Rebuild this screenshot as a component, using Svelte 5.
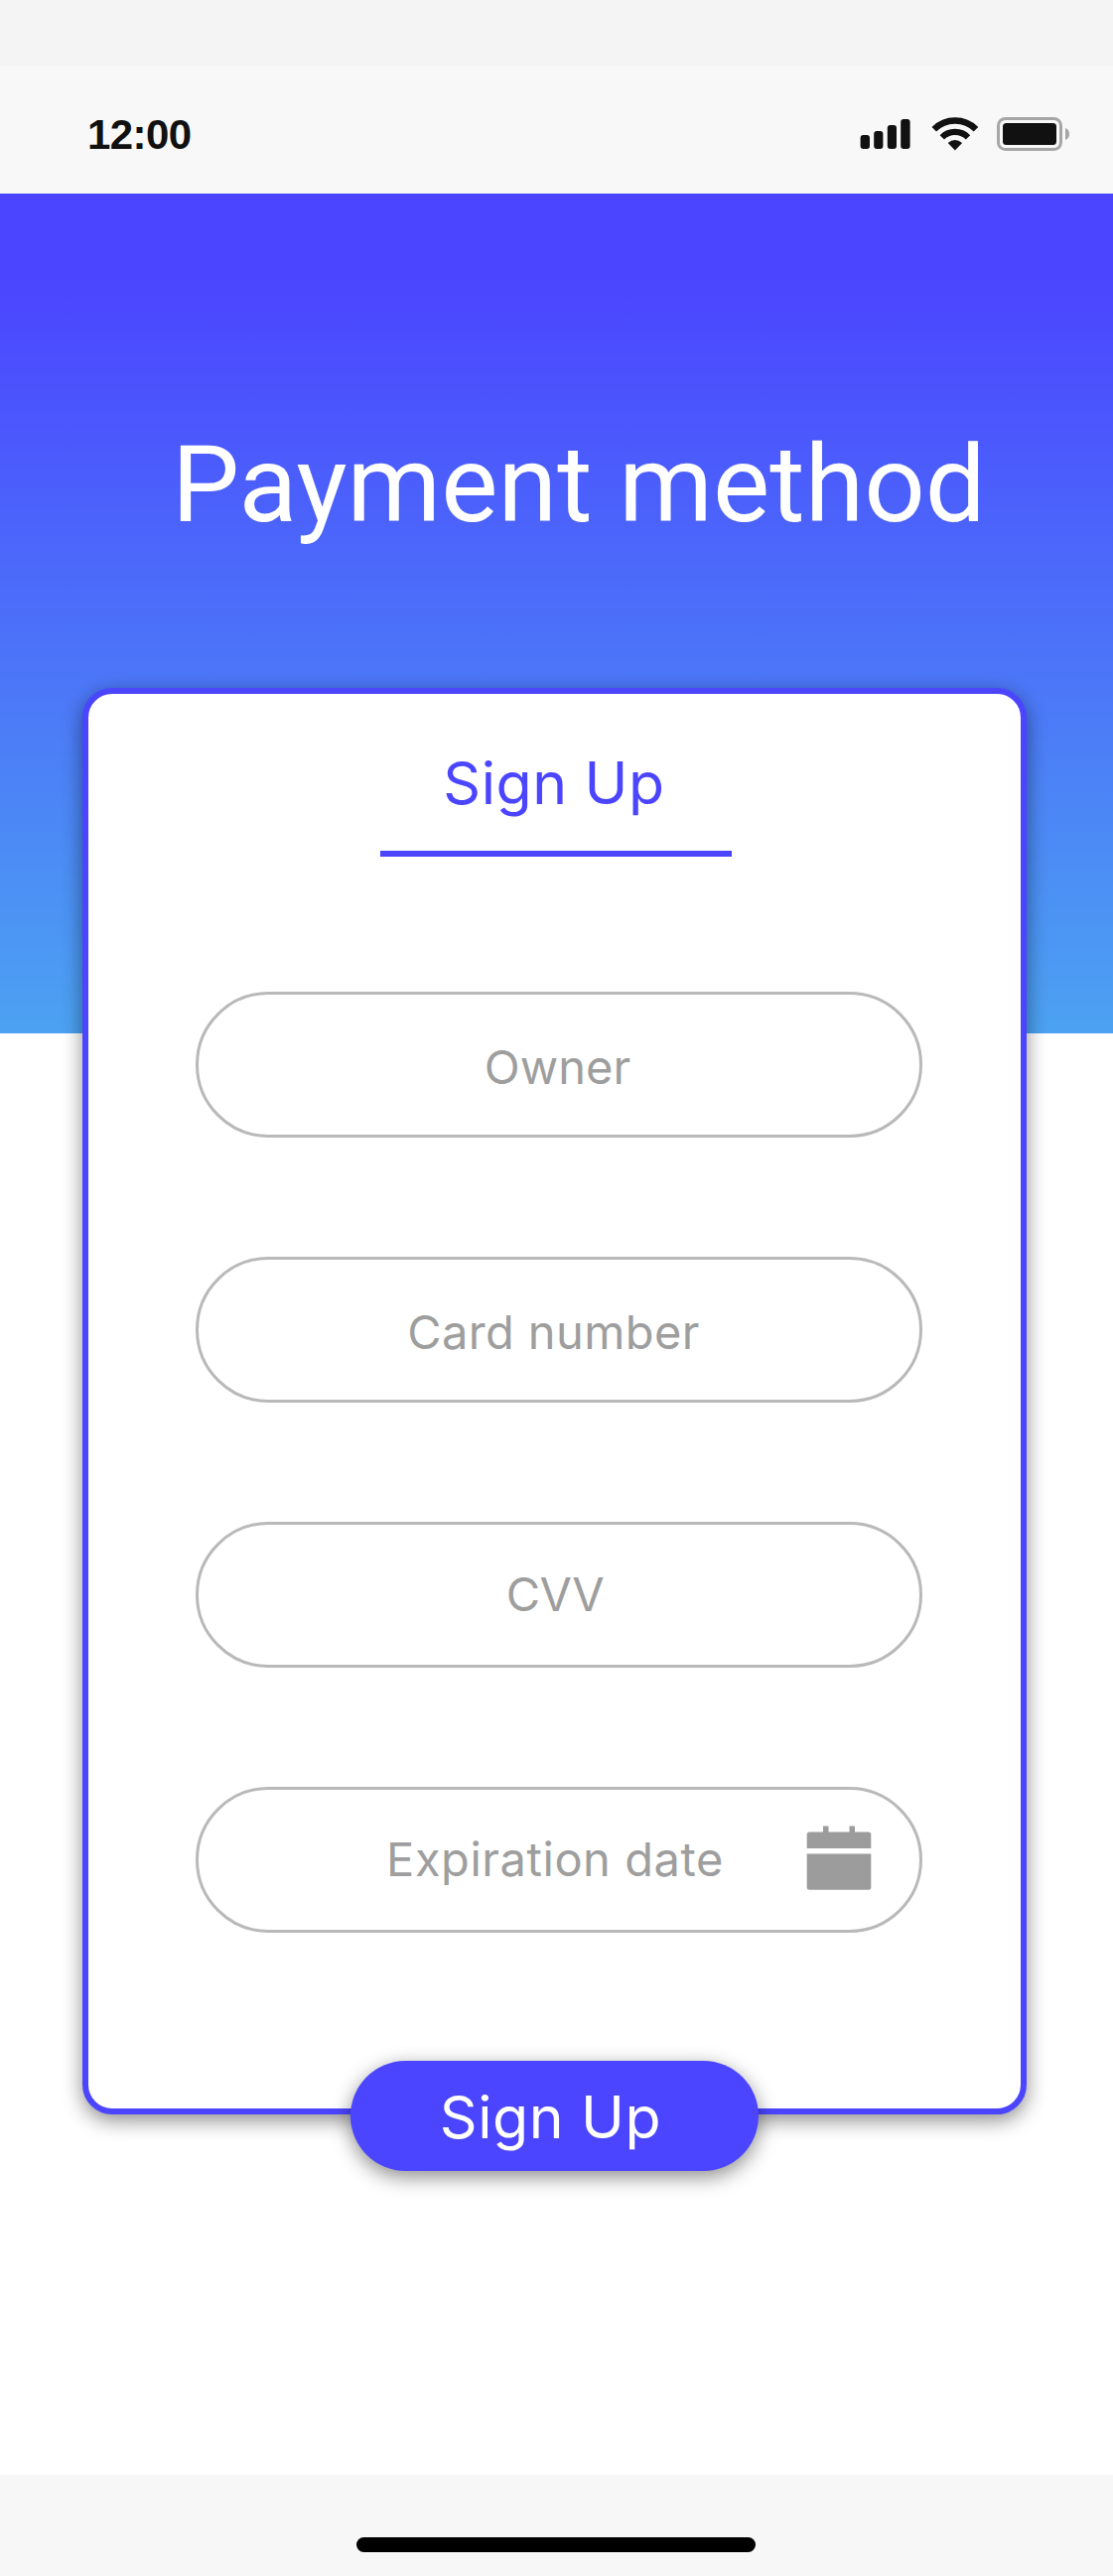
<script>
  const fields = [
    { id: 'owner', label: 'Owner' },
    { id: 'number', label: 'Card number' },
    { id: 'cvv', label: 'CVV' },
    { id: 'expiry', label: 'Expiration date', calendar: true }
  ];
</script>

<div class="screen">
  <div class="top-strip"></div>
  <header class="status">
    <span class="time">12:00</span>
    <svg class="status-icons" width="212" height="34" viewBox="0 0 212 34">
      <g fill="#111">
        <rect x="0.6" y="18" width="9.4" height="14" rx="3" />
        <rect x="14.2" y="14" width="9.2" height="18" rx="3" />
        <rect x="27.8" y="8" width="9.2" height="24" rx="3" />
        <rect x="41.2" y="2" width="9.4" height="30" rx="3" />
        <path d="M95.9 33.4 L88.7 26 Q95.9 19.8 103.1 26 Z" />
      </g>
      <g fill="none" stroke="#111">
        <path stroke-width="6.4" d="M74.8 12.2 A29.8 29.8 0 0 1 117 12.2" />
        <path stroke-width="6.2" d="M82.8 20.4 A18.5 18.5 0 0 1 109 20.4" />
      </g>
      <rect x="139.5" y="1.5" width="63" height="31" rx="7" fill="none" stroke="#a6a6a6" stroke-width="3" />
      <rect x="144" y="6" width="54" height="22" rx="3.5" fill="#111" />
      <path fill="#a6a6a6" d="M207 11 Q211 12.500 211 17 Q211 21.500 207 23 Z" />
    </svg>
  </header>

  <main>
    <h1>Payment method</h1>
    <section class="card">
      <h2>Sign Up</h2>
      <div class="fields">
        {#each fields as field (field.id)}
          <div class="field {field.id}">
            <span>{field.label}</span>
            {#if field.calendar}
              <svg class="calendar" width="66" height="66" viewBox="0 0 66 66" fill="#9c9c9c">
                <path d="M0.700 23 V9 Q0.700 6.500 3.200 6.500 H17 V0.500 H22.500 V6.500 H43.500 V0.500 H49 V6.500 H62.800 Q65.300 6.500 65.300 9 V23 Z" />
                <path d="M0.700 28.500 H65.300 V62.300 Q65.300 64.800 62.800 64.800 H3.200 Q0.700 64.800 0.700 62.300 Z" />
              </svg>
            {/if}
          </div>
        {/each}
      </div>
      <button>Sign Up</button>
    </section>
  </main>

  <footer><div class="home"></div></footer>
</div>

<style>
  :global(body) { margin: 0; background: #fff; }
  .screen {
    width: 1121px;
    height: 2595px;
    display: flex;
    flex-direction: column;
    font-family: Inter, "Liberation Sans", sans-serif;
    overflow: hidden;
  }
  .top-strip { height: 66px; background: #f4f4f4; }
  .status {
    box-sizing: border-box;
    height: 129px;
    padding: 0 43px 0 88px;
    display: flex;
    justify-content: space-between;
    background: #f8f8f8;
  }
  .time {
    margin-top: 46px;
    font: bold 42px/48px "Liberation Sans", Arial, sans-serif;
    letter-spacing: -0.6px;
    color: #111;
  }
  .status-icons { margin-top: 52px; }
  main {
    flex: 1;
    display: flex;
    flex-direction: column;
    background: linear-gradient(#4b45ff 10%, #4ca2f2) top / 100% 846px no-repeat #fff;
  }
  h1 {
    margin: 229px 0 0 173px;
    height: 269px;
    font: 400 108px/128px Roboto, sans-serif;
    color: #fff;
    white-space: nowrap;
  }
  .card {
    box-sizing: border-box;
    width: 951px;
    height: 1437px;
    margin-left: 83px;
    border: 6px solid #4b45ff;
    border-radius: 30px;
    background: #fff;
    box-shadow: 0 6px 20px rgba(0, 0, 0, 0.45);
    display: flex;
    flex-direction: column;
  }
  h2 {
    flex: none;
    box-sizing: border-box;
    width: 354px;
    height: 114px;
    margin: 50px 0 0 294px;
    padding-right: 4px;
    border-bottom: 6px solid #4b45ff;
    font-size: 59px;
    line-height: 80px;
    font-weight: 400;
    letter-spacing: 0.5px;
    text-align: center;
    color: #4b45ff;
  }
  .fields {
    flex: none;
    margin: 136px 0 0 108px;
    display: flex;
    flex-direction: column;
    gap: 120px;
  }
  .field {
    box-sizing: border-box;
    position: relative;
    width: 732px;
    height: 147px;
    border: 3px solid #b9b9b9;
    border-radius: 74px;
    display: flex;
    align-items: center;
    justify-content: center;
    font-size: 47px;
    line-height: 60px;
    color: #9e9e9e;
    white-space: nowrap;
  }
  .owner { padding: 5px 3px 0 0; }
  .number { padding: 5px 11px 0 0; letter-spacing: 0.4px; }
  .cvv { padding: 0 8px 2px 0; letter-spacing: -0.4px; }
  .expiry { padding: 0 8px 2px 0; letter-spacing: 0.55px; }
  .calendar { position: absolute; right: 48px; top: 36px; }
  button {
    flex: none;
    width: 411px;
    height: 111px;
    margin: 129px 0 0 264px;
    padding: 2px 8px 0 0;
    border: 0;
    border-radius: 56px;
    background: #4b45ff;
    box-shadow: 0 6px 20px rgba(0, 0, 0, 0.45);
    color: #fff;
    font-family: inherit;
    font-size: 59px;
    line-height: 109px;
    letter-spacing: 0.5px;
  }
  footer {
    height: 102px;
    background: #f7f7f7;
    display: flex;
    justify-content: center;
  }
  .home {
    width: 402px;
    height: 15px;
    margin: 63px 1px 0 0;
    border-radius: 8px;
    background: #000;
  }
</style>
